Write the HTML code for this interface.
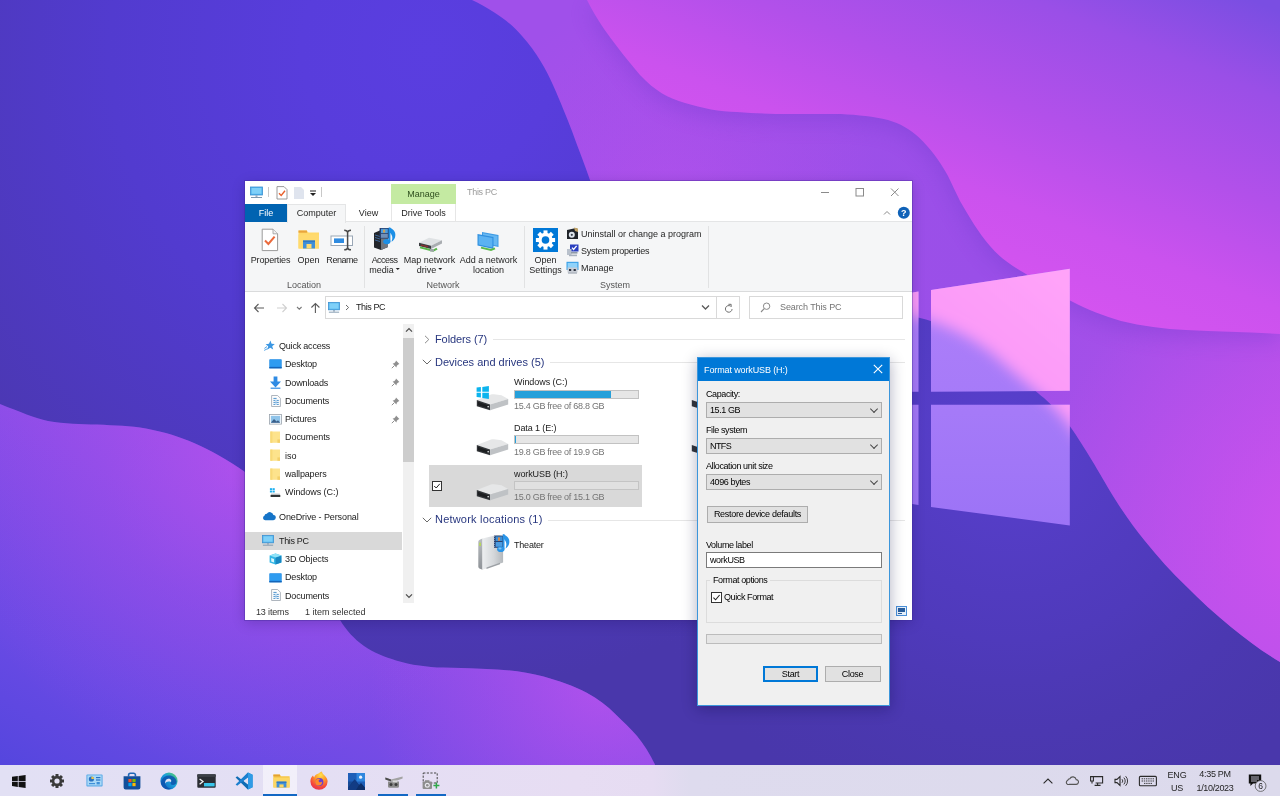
<!DOCTYPE html>
<html lang="en">
<head>
<meta charset="utf-8">
<title>Format workUSB (H:) - This PC</title>
<style>
*{box-sizing:border-box;margin:0;padding:0}
html,body{width:1280px;height:796px;overflow:hidden;background:#4b36b4}
body{font-family:"Liberation Sans",sans-serif;font-size:9px;color:#1a1a1a;position:relative}
.abs{position:absolute}
.t{position:absolute;white-space:nowrap;line-height:12px;height:12px}
.c{text-align:center}
#wall{position:absolute;left:0;top:0;width:1280px;height:796px}
/* ---------- taskbar ---------- */
#taskbar{position:absolute;left:0;top:765px;width:1280px;height:31px;background:linear-gradient(90deg,#e2e0f4 0%,#e4dff4 25%,#e7ddf3 45%,#e6dcf2 51%,#dedbee 54%,#dcdaec 100%)}
/* ---------- explorer window ---------- */
#win{position:absolute;left:245px;top:181px;width:667px;height:439px;background:#fff;box-shadow:0 0 0 1px rgba(60,40,150,.35),0 3px 12px rgba(20,10,70,.22)}
#ribbon{position:absolute;left:0;top:41px;width:667px;height:71px;background:#f5f6f7;border-top:1px solid #e4e5e6;border-bottom:1px solid #dadbdc}
/* ---------- dialog ---------- */
#dlg{position:absolute;left:697px;top:357px;width:193px;height:349px;background:#f0f0f0;border:1px solid #3c96db;box-shadow:0 3px 14px rgba(10,10,60,.32)}
#dlgtitle{position:absolute;left:0;top:0;width:191px;height:23px;background:#0078d7}

/* text helpers */
.g{color:#747474}
.tab{position:absolute;top:204px;height:18px;line-height:18px;text-align:center;font-size:9px;color:#262626}
.rl{position:absolute;font-size:9px;line-height:10px;text-align:center;color:#262626;white-space:nowrap;transform:translateX(-50%)}
.grp{position:absolute;top:279px;font-size:9px;line-height:12px;color:#555;transform:translateX(-50%);white-space:nowrap}
.vsep{position:absolute;top:226px;width:1px;height:62px;background:#e1e2e3}
.nav{position:absolute;font-size:9px;line-height:12px;white-space:nowrap;color:#1a1a1a}
.hdr{position:absolute;left:435px;font-size:11px;line-height:14px;color:#28377f;white-space:nowrap}
.hline{position:absolute;height:1px;background:#e6e6e6}
.bar{position:absolute;left:514px;width:125px;height:9px;background:#e6e6e6;border:1px solid #c2c2c2}
.bar i{display:block;height:7px;background:#26a0da}
.ico{position:absolute;overflow:visible}

.dl{color:#000;letter-spacing:-.4px}
.cmb{position:absolute;left:706px;width:176px;height:16px;background:#e1e1e1;border:1px solid #adadad;font-size:9px;line-height:14px;color:#000;letter-spacing:-.4px;padding-left:3px}
.cmb:after{content:"";position:absolute;right:4px;top:3px;width:5px;height:5px;border-right:1px solid #444;border-bottom:1px solid #444;transform:rotate(45deg) scale(.95)}
.btn{position:absolute;height:16.5px;background:#e1e1e1;border:1px solid #adadad;font-size:9px;line-height:14.5px;text-align:center;color:#000;letter-spacing:-.3px;white-space:nowrap}
.dd{display:inline-block;width:0;height:0;border-left:2.2px solid transparent;border-right:2.2px solid transparent;border-top:2.6px solid #222;vertical-align:2.6px;margin-left:-.5px}
</style>
</head>
<body>
<!-- ================= WALLPAPER ================= -->
<svg id="wall" viewBox="0 0 1280 796">
<defs>
  <radialGradient id="gBase" cx="430" cy="50" r="640" gradientUnits="userSpaceOnUse">
    <stop offset="0" stop-color="#5a3ee0"/><stop offset=".2" stop-color="#583ddc"/><stop offset=".5" stop-color="#523bcf"/><stop offset="1" stop-color="#4937ab"/>
  </radialGradient>
  <linearGradient id="gB" x1="560" y1="60" x2="1280" y2="520" gradientUnits="userSpaceOnUse">
    <stop offset="0" stop-color="#a050ea"/><stop offset=".55" stop-color="#9a4fe8"/><stop offset="1" stop-color="#b451ea"/>
  </linearGradient>
  <radialGradient id="gBase2" cx="1010" cy="440" r="400" gradientUnits="userSpaceOnUse">
    <stop offset="0" stop-color="#5a40cf" stop-opacity="1"/><stop offset=".5" stop-color="#533cc6" stop-opacity=".6"/><stop offset="1" stop-color="#4b38b4" stop-opacity="0"/>
  </radialGradient>
  <radialGradient id="gBh2" cx="670" cy="200" r="210" gradientUnits="userSpaceOnUse">
    <stop offset="0" stop-color="#c452ee" stop-opacity=".4"/><stop offset="1" stop-color="#c050ec" stop-opacity="0"/>
  </radialGradient>
  <radialGradient id="gBh" cx="1330" cy="540" r="300" gradientUnits="userSpaceOnUse">
    <stop offset="0" stop-color="#d052ee" stop-opacity="1"/><stop offset="1" stop-color="#c050ec" stop-opacity="0"/>
  </radialGradient>
  <linearGradient id="gC" x1="1100" y1="-60" x2="950" y2="320" gradientUnits="userSpaceOnUse">
    <stop offset="0" stop-color="#7a4ee2"/><stop offset=".2" stop-color="#9a4fe7"/><stop offset=".45" stop-color="#b250ea"/><stop offset=".68" stop-color="#cb52ee"/><stop offset=".9" stop-color="#d654f0"/><stop offset="1" stop-color="#d855f0"/>
  </linearGradient>
  <linearGradient id="gD" x1="94" y1="234" x2="-188" y2="762" gradientUnits="userSpaceOnUse">
    <stop offset="0" stop-color="#ac50ec"/><stop offset=".333" stop-color="#8a4de8"/><stop offset=".657" stop-color="#694ae4"/><stop offset=".853" stop-color="#5546de"/><stop offset="1" stop-color="#4644da"/>
  </linearGradient>
  <radialGradient id="gDh2" cx="600" cy="690" r="230" gradientUnits="userSpaceOnUse">
    <stop offset="0" stop-color="#cc54f0" stop-opacity=".5"/><stop offset=".5" stop-color="#c452ee" stop-opacity=".24"/><stop offset="1" stop-color="#c050ee" stop-opacity="0"/>
  </radialGradient>
  <radialGradient id="gDh" cx="240" cy="470" r="300" gradientUnits="userSpaceOnUse">
    <stop offset="0" stop-color="#cc54f0" stop-opacity=".44"/><stop offset=".45" stop-color="#c452ee" stop-opacity=".2"/><stop offset="1" stop-color="#c050ee" stop-opacity="0"/>
  </radialGradient>
  <linearGradient id="gP1" x1="1069" y1="270" x2="931" y2="391" gradientUnits="userSpaceOnUse">
    <stop offset="0" stop-color="#ffa2f8"/><stop offset=".6" stop-color="#fb9af8"/><stop offset=".8" stop-color="#bd82f8"/><stop offset="1" stop-color="#a679f8"/>
  </linearGradient>
  <linearGradient id="gP2" x1="1069" y1="404" x2="960" y2="500" gradientUnits="userSpaceOnUse">
    <stop offset="0" stop-color="#f59af8"/><stop offset=".18" stop-color="#a97cf8"/><stop offset="1" stop-color="#9f76f6"/>
  </linearGradient>
  <linearGradient id="gPb" x1="0" y1="300" x2="0" y2="525" gradientUnits="userSpaceOnUse">
    <stop offset="0" stop-color="#ad7ef9"/><stop offset=".5" stop-color="#a57af8"/><stop offset="1" stop-color="#9c73f6"/>
  </linearGradient>
  <linearGradient id="gPp" x1="1069" y1="270" x2="960" y2="400" gradientUnits="userSpaceOnUse">
    <stop offset="0" stop-color="#ffa4f9"/><stop offset=".7" stop-color="#fb9af8"/><stop offset="1" stop-color="#ee92f8"/>
  </linearGradient>
  <filter id="sh2" x="-10%" y="-10%" width="120%" height="120%"><feGaussianBlur stdDeviation="7"/></filter>
  <filter id="sh" x="-10%" y="-10%" width="120%" height="130%">
    <feGaussianBlur stdDeviation="11"/>
  </filter>
</defs>
<rect width="1280" height="796" fill="url(#gBase)"/>
<rect width="1280" height="796" fill="url(#gBase2)"/>
<!-- layer B : medium purple -->
<path id="pB" d="M472,0 C495,11 511,23 522,36 C537,53 546,69 553,85 C561,103 567,118 572,131 C578,148 585,165 590,180 L600,312 L912,316 C950,324 985,345 1005,365 C1020,378 1034,390 1044,398 C1054,407 1062,416 1069,425 C1080,440 1098,470 1110,491 C1122,511 1133,526 1145,541 C1158,557 1171,572 1186,586 C1200,600 1215,614 1231,627 C1247,640 1263,652 1280,662 L1280,0 Z" fill="url(#gB)"/>
<path d="M472,0 C495,11 511,23 522,36 C537,53 546,69 553,85 C561,103 567,118 572,131 C578,148 585,165 590,180 L600,312 L912,316 C950,324 985,345 1005,365 C1020,378 1034,390 1044,398 C1054,407 1062,416 1069,425 C1080,440 1098,470 1110,491 C1122,511 1133,526 1145,541 C1158,557 1171,572 1186,586 C1200,600 1215,614 1231,627 C1247,640 1263,652 1280,662 L1280,0 Z" fill="url(#gBh2)"/>
<path d="M1069,425 C1080,440 1098,470 1110,491 C1122,511 1133,526 1145,541 C1158,557 1171,572 1186,586 C1200,600 1215,614 1231,627 C1247,640 1263,652 1280,662 L1280,334 L1000,250 Z" fill="url(#gBh)"/>
<!-- layer C shadow + shape : magenta -->
<path d="M587,0 C596,18 606,34 640,75 C655,91 668,98 685,103 C702,108 720,112 737,112 C755,113.5 772,114 790,114 C808,114 824,114 841,114 C858,115 874,116.5 888,120 C900,123.5 910,129 919,137.5 C930,148 939,160 947.5,175 C952,184 956,193 960,201 C970,218 978,232 990,246 C1000,258 1012,266 1026,274 C1040,284 1056,294 1071,301 C1088,310 1104,316 1121,321 C1142,326 1164,329 1186,330 C1218,332 1250,332 1280,334 L1280,0 Z" transform="translate(0,8)" fill="#5a2fc0" opacity=".24" filter="url(#sh)"/>
<path id="pC" d="M587,0 C596,18 606,34 640,75 C655,91 668,98 685,103 C702,108 720,112 737,112 C755,113.5 772,114 790,114 C808,114 824,114 841,114 C858,115 874,116.5 888,120 C900,123.5 910,129 919,137.5 C930,148 939,160 947.5,175 C952,184 956,193 960,201 C970,218 978,232 990,246 C1000,258 1012,266 1026,274 C1040,284 1056,294 1071,301 C1088,310 1104,316 1121,321 C1142,326 1164,329 1186,330 C1218,332 1250,332 1280,334 L1280,0 Z" fill="url(#gC)"/>
<!-- layer D : lower-left blob -->
<path id="pD" d="M0,404 C20,412 35,418 48,421 C65,424 80,424 97,424.6 C115,425.5 130,426 146,428.5 C165,432 180,437 194,443 C203,447 211,451 218,455 C228,461 237,466 245,472 L300,600 L340,620 C346,630 354,639 364,646 C374,653 385,657 396,660.4 C411,665 427,667 443,667.6 C461,668.3 479,668.6 497,669.4 C513,670.2 529,672.5 543.6,676.5 C559,680.8 574,686 586.7,692.7 C598,698.7 607.5,706 615.5,714.3 C623,721.5 630.5,728.5 637,736 C644,744.5 650,754 655,764.7 L657,768 L0,768 Z" fill="url(#gD)"/>
<path d="M0,404 C20,412 35,418 48,421 C65,424 80,424 97,424.6 C115,425.5 130,426 146,428.5 C165,432 180,437 194,443 C203,447 211,451 218,455 C228,461 237,466 245,472 L300,600 L340,620 C346,630 354,639 364,646 C374,653 385,657 396,660.4 C411,665 427,667 443,667.6 C461,668.3 479,668.6 497,669.4 C513,670.2 529,672.5 543.6,676.5 C559,680.8 574,686 586.7,692.7 C598,698.7 607.5,706 615.5,714.3 C623,721.5 630.5,728.5 637,736 C644,744.5 650,754 655,764.7 L657,768 L0,768 Z" fill="url(#gDh)"/>
<path d="M0,404 C20,412 35,418 48,421 C65,424 80,424 97,424.6 C115,425.5 130,426 146,428.5 C165,432 180,437 194,443 C203,447 211,451 218,455 C228,461 237,466 245,472 L300,600 L340,620 C346,630 354,639 364,646 C374,653 385,657 396,660.4 C411,665 427,667 443,667.6 C461,668.3 479,668.6 497,669.4 C513,670.2 529,672.5 543.6,676.5 C559,680.8 574,686 586.7,692.7 C598,698.7 607.5,706 615.5,714.3 C623,721.5 630.5,728.5 637,736 C644,744.5 650,754 655,764.7 L657,768 L0,768 Z" fill="url(#gDh2)"/>
<!-- windows logo -->
<clipPath id="cpL"><polygon points="850,303 918.5,291.5 918.5,391.8 850,392"/><polygon points="850,404.8 918.5,404.8 918.5,505 850,494"/><polygon points="931,290 1069.8,268.8 1069.8,390.8 931,391.8"/><polygon points="931,404.8 1069.8,404.8 1069.8,525.5 931,507"/></clipPath>
<g clip-path="url(#cpL)">
  <rect x="840" y="260" width="240" height="280" fill="url(#gPb)"/>
  <path d="M472,0 C495,11 511,23 522,36 C537,53 546,69 553,85 C561,103 567,118 572,131 C578,148 585,165 590,180 L600,312 L912,316 C950,324 985,345 1005,365 C1020,378 1034,390 1044,398 C1054,407 1062,416 1069,425 C1080,440 1098,470 1110,491 C1122,511 1133,526 1145,541 C1158,557 1171,572 1186,586 C1200,600 1215,614 1231,627 C1247,640 1263,652 1280,662 L1280,0 Z" fill="url(#gPp)" filter="url(#sh2)"/>
</g>
</svg>

<div id="ui" style="position:absolute;left:0;top:0;width:1280px;height:796px;will-change:transform">
<!-- ================= TASKBAR ================= -->
<div id="taskbar"></div>
<div class="abs" style="left:263px;top:765px;width:34px;height:31px;background:rgba(255,255,255,.5)"></div>
<div class="abs" style="left:263px;top:794px;width:34px;height:2px;background:#1368c4"></div>
<div class="abs" style="left:378px;top:794px;width:30px;height:2px;background:#1368c4"></div>
<div class="abs" style="left:416px;top:794px;width:30px;height:2px;background:#1368c4"></div>
<!-- start -->
<svg class="ico" style="left:11.5px;top:774.5px" width="14" height="13" viewBox="0 0 14 13"><g fill="#111"><path d="M0,1.8 L5.8,1 V6 H0 Z"/><path d="M6.6,.9 L13.6,0 V6 H6.6 Z"/><path d="M0,6.8 H5.8 V11.9 L0,11.1 Z"/><path d="M6.6,6.8 H13.6 V13 L6.6,12 Z"/></g></svg>
<!-- settings gear -->
<svg class="ico" style="left:50px;top:774px" width="14" height="14" viewBox="0 0 14 14"><g transform="translate(7,7)"><g fill="#3a3a3a"><rect x="-1.5" y="-7" width="3" height="14"/><rect x="-1.5" y="-7" width="3" height="14" transform="rotate(45)"/><rect x="-1.5" y="-7" width="3" height="14" transform="rotate(90)"/><rect x="-1.5" y="-7" width="3" height="14" transform="rotate(135)"/><circle r="5.2"/></g><circle r="2.6" fill="#e2e0f3"/></g></svg>
<!-- control panel -->
<svg class="ico" style="left:86px;top:774px" width="17" height="13" viewBox="0 0 17 13"><rect x=".4" y=".4" width="16.2" height="12" rx="1" fill="#5aa9e6"/><rect x="1.4" y="1.4" width="14.2" height="10" fill="#a9d8f7"/><circle cx="5.4" cy="5" r="2.6" fill="#2a72c2"/><path d="M5.4,5 V2.4 A2.6,2.6 0 0 1 8,5 Z" fill="#f3c540"/><rect x="10" y="3" width="4.4" height="1.2" fill="#2a72c2"/><rect x="10" y="5.4" width="4.4" height="1.2" fill="#2a72c2"/><rect x="3" y="9" width="6" height="1.2" fill="#3f8fd8"/><rect x="10.6" y="8" width="3.2" height="2.4" fill="#3f8fd8"/></svg>
<!-- store -->
<svg class="ico" style="left:122.5px;top:772px" width="18" height="18" viewBox="0 0 18 18"><path d="M5.6,4.4 V3 A1.8,1.8 0 0 1 7.4,1.2 H10.6 A1.8,1.8 0 0 1 12.4,3 V4.4" fill="none" stroke="#1f67b7" stroke-width="1.6"/><path d="M.6,4.2 H17.4 V15.6 A2,2 0 0 1 15.4,17.6 H2.6 A2,2 0 0 1 .6,15.6 Z" fill="#134f9a"/><rect x="5.4" y="7" width="3.2" height="3.2" fill="#f25022"/><rect x="9.4" y="7" width="3.2" height="3.2" fill="#7fba00"/><rect x="5.4" y="11" width="3.2" height="3.2" fill="#00a4ef"/><rect x="9.4" y="11" width="3.2" height="3.2" fill="#ffb900"/></svg>
<!-- edge -->
<svg class="ico" style="left:160px;top:772px" width="18" height="18" viewBox="0 0 18 18"><defs><linearGradient id="eg1" x1="0" y1="1" x2="1" y2="0"><stop offset="0" stop-color="#0d59b8"/><stop offset=".55" stop-color="#1aa0dc"/><stop offset="1" stop-color="#5fd55a"/></linearGradient></defs><circle cx="9" cy="9" r="8.6" fill="url(#eg1)"/><path d="M9,3.4 C13,3.4 16.4,6 16.6,9.6 C16.6,11.6 15,13 13,13 C11.4,13 10.4,12.2 10.6,11 C10.8,9.8 11.4,9.6 11.2,8.6 C11,7.2 9.6,6.6 8.2,6.8 C5.6,7.2 4.4,10 5.6,12.8 C6.6,15.2 9,16.8 11.6,16.6 C9,18.2 4.6,17.6 2.2,14.6 C-.6,10.6 2,3.6 9,3.4 Z" fill="#0c54ae" opacity=".85"/><path d="M8.2,6.8 C6,7.2 4.8,9.4 5.2,11.6 C6,9.6 8.4,9 10.8,10 C11.2,9.4 11.4,9 11.2,8.4 C10.8,7.2 9.6,6.6 8.2,6.8 Z" fill="#e2e0f3"/></svg>
<!-- terminal -->
<svg class="ico" style="left:197px;top:774px" width="19" height="14" viewBox="0 0 19 14"><rect x=".3" y=".3" width="18.4" height="13.4" rx="1" fill="#2a2d33"/><rect x=".3" y=".3" width="18.4" height="2.6" fill="#3d4148"/><path d="M2.6,5 L6,7.6 L2.6,10.2" fill="none" stroke="#f2f2f2" stroke-width="1.3"/><rect x="7" y="9" width="10.6" height="3.4" fill="#39c5ea"/></svg>
<!-- vs code -->
<svg class="ico" style="left:234.5px;top:772px" width="18" height="18" viewBox="0 0 18 18"><path d="M13,.6 L17.6,2.8 V15.2 L13,17.4 L4.6,9 Z" fill="#1f8ad2"/><path d="M13,.6 L17.6,2.8 V15.2 L13,17.4 Z" fill="#2f9be6"/><path d="M13,5.2 V12.8 L8,9 Z" fill="#e2e0f3"/><path d="M.6,5.6 L2.2,4.2 L13,12.8 V17.4 Z" fill="#0f6cb4"/><path d="M.6,12.4 L2.2,13.8 L13,5.2 V.6 Z" fill="#1b7fcf"/></svg>
<!-- explorer -->
<svg class="ico" style="left:272.5px;top:773.5px" width="17" height="14" viewBox="0 0 17 14"><path d="M.4,.6 H6.6 L8.2,2.2 H16.6 V13.4 H.4 Z" fill="#f6c648"/><rect x=".4" y=".6" width="6.6" height="1.8" fill="#e3a132"/><path d="M.4,3.6 H16.6 V13.4 H.4 Z" fill="#fcd663"/><path d="M3.6,7.6 H13.4 V13.4 H3.6 Z" fill="#3f8fd8"/><rect x="6.4" y="10.4" width="4.2" height="3" fill="#fcd663"/><rect x="3.6" y="7.6" width="9.8" height="1.4" fill="#2f78c4"/></svg>
<!-- firefox -->
<svg class="ico" style="left:309.5px;top:771px" width="18" height="19" viewBox="0 0 18 19"><defs><radialGradient id="ff1" cx=".6" cy=".2" r=".95"><stop offset="0" stop-color="#ffe14d"/><stop offset=".35" stop-color="#ff9a28"/><stop offset=".7" stop-color="#f5453c"/><stop offset="1" stop-color="#d42a6a"/></radialGradient></defs><path d="M9,2.2 C10,1 11.2,.6 12,.4 C12,2 13,3 14.6,4.6 C16.6,6.6 17.6,8.6 17.6,10.6 A8.6,8.2 0 0 1 .4,10.6 C.4,8 1.4,6 3,4.6 C3.2,5.4 3.6,6 4.2,6.4 C4.6,4.4 6.6,2.8 9,2.2 Z" fill="url(#ff1)"/><circle cx="9.4" cy="11" r="4" fill="#6a3fd0"/><path d="M5.4,9.4 C6.4,8 8.4,7.4 10.4,8.2 C9,8.4 8.4,9.4 8.8,10.4 C9.2,11.4 11,11.6 12,10.8 C12.4,13 10.6,14.8 8.6,14.6 C6.2,14.4 4.6,12 5.4,9.4 Z" fill="#ff8a2a"/></svg>
<!-- photos -->
<svg class="ico" style="left:347.5px;top:772.5px" width="17" height="17" viewBox="0 0 17 17"><rect width="17" height="17" fill="#1f5fb8"/><rect x="8.5" width="8.5" height="8.5" fill="#2f86de"/><rect y="8.5" width="8.5" height="8.5" fill="#164a96"/><circle cx="12.6" cy="4.2" r="1.6" fill="#e8f2ff"/><path d="M0,15 L6.6,6.6 L11,12 L13,10 L17,14.6 V17 H0 Z" fill="#0d2f6a"/><path d="M6.6,6.6 L11,12 L8,17 H0 V15 Z" fill="#123c84"/></svg>
<!-- tool -->
<svg class="ico" style="left:384.5px;top:776px" width="18" height="12" viewBox="0 0 18 12"><path d="M.4,1.4 L6,3.4 L17.6,.6 L17.6,2.6 L8,6 L.4,3.4 Z" fill="#a3a3a3"/><path d="M.4,1.4 L6,3.4 V5.4 L.4,3.4 Z" fill="#4a4a4a"/><path d="M3,5.4 H14 V10.4 A1.4,1.4 0 0 1 12.6,11.8 H4.4 A1.4,1.4 0 0 1 3,10.4 Z" fill="#8b8b8b"/><circle cx="6" cy="8.6" r="1.5" fill="#3c3c3c"/><circle cx="11" cy="8.6" r="1.5" fill="#3c3c3c"/><rect x="7.6" y="4.4" width="4.6" height="2" fill="#d8d8d8"/></svg>
<!-- snip -->
<svg class="ico" style="left:422px;top:772px" width="18" height="18" viewBox="0 0 18 18"><rect x="1.2" y="1" width="14" height="10" fill="none" stroke="#444" stroke-width="1" stroke-dasharray="2.2,1.4"/><rect x=".6" y="9.4" width="9.4" height="7.6" rx="1" fill="#8e8e8e"/><rect x="3" y="8.2" width="4.4" height="1.8" fill="#8e8e8e"/><circle cx="5.3" cy="13.2" r="2.5" fill="#e8e8ee"/><circle cx="5.3" cy="13.2" r="1.3" fill="#8e8e8e"/><path d="M14.4,10.6 V16.6 M11.4,13.6 H17.4" stroke="#2fa84a" stroke-width="1.5"/></svg>
<!-- tray -->
<svg class="ico" style="left:1040px;top:772px" width="122" height="18" viewBox="0 0 122 18"><g fill="none" stroke="#2b2b2b" stroke-width="1.1"><path d="M3.6,11.4 L8,7 L12.4,11.4"/><path d="M29.2,12.4 H36 A2.4,2.4 0 0 0 36.2,7.6 A3.4,3.4 0 0 0 29.8,6.8 A2.4,2.4 0 0 0 27.6,8.6 A2,2 0 0 0 29.2,12.4 Z" stroke="#555"/><path d="M52.6,4.6 H62.6 V11 H55.6 M50.6,4.6 H53.4 V9 H50.6 Z M52,9 V11.6 M57.6,11 V13.4 M54.6,13.4 H60.6"/><path d="M75,7.4 H77 L80,4.6 V13.4 L77,10.6 H75 Z"/><path d="M82,7.2 A2.6,2.6 0 0 1 82,10.8 M83.8,5.6 A4.8,4.8 0 0 1 83.8,12.4 M85.6,4.2 A6.8,6.8 0 0 1 85.6,13.8" stroke-width=".9"/><rect x="99.4" y="4.4" width="17" height="9.4" rx="1"/><path d="M101.6,6.8 H114.4 M101.6,9 H114.4 M104,11.4 H112" stroke-width=".9" stroke-dasharray="1.4,.8"/></g></svg>
<div class="t c" style="left:1157px;top:768.7px;width:40px;color:#1f1f1f;letter-spacing:-.2px">ENG</div>
<div class="t c" style="left:1157px;top:781.5px;width:40px;color:#1f1f1f;letter-spacing:-.2px">US</div>
<div class="t c" style="left:1185px;top:768.3px;width:60px;color:#1f1f1f;letter-spacing:-.3px">4:35 PM</div>
<div class="t c" style="left:1185px;top:781.5px;width:60px;color:#1f1f1f;letter-spacing:-.35px">1/10/2023</div>
<svg class="ico" style="left:1248px;top:774px" width="20" height="19" viewBox="0 0 20 19"><path d="M.8,.6 H13.2 V9.6 H5 L2.4,12 V9.6 H.8 Z" fill="#111"/><path d="M3,3 H11 M3,5 H11 M3,7 H9" stroke="#e2e0f3" stroke-width=".8"/><circle cx="12.6" cy="12" r="5.4" fill="#dfddf0" stroke="#555" stroke-width=".8"/><text x="12.6" y="15" font-size="8.5" fill="#222" text-anchor="middle" font-family="Liberation Sans,sans-serif">6</text></svg>

<!-- ================= EXPLORER WINDOW ================= -->
<div id="win"></div>
<div id="ribbon" style="left:245px;top:221px"></div>
<!-- title bar -->
<svg class="ico" style="left:249px;top:186px" width="15" height="13" viewBox="0 0 15 13"><rect x="1.5" y="1" width="12" height="8" fill="#4fb4ee" stroke="#3a8fd0" stroke-width=".8"/><rect x="2.6" y="2" width="9.8" height="5.8" fill="#7fd0f8"/><rect x="6.5" y="9.4" width="2" height="1.4" fill="#8aa0b4"/><rect x="2" y="11" width="11" height="1" fill="#7f98ae"/></svg>
<div class="abs" style="left:268px;top:187px;width:1px;height:10px;background:#c8c8c8"></div>
<svg class="ico" style="left:276px;top:186px" width="12" height="14" viewBox="0 0 12 14"><path d="M1,.6 H8 L11,3.6 V13 H1 Z" fill="#fff" stroke="#8f8f8f" stroke-width=".9"/><path d="M3,7.2 L5.2,9.4 L9,4.8" fill="none" stroke="#e9602c" stroke-width="1.4"/></svg>
<svg class="ico" style="left:293px;top:187px" width="12" height="13" viewBox="0 0 12 13"><path d="M1,0 H8 L11,3 V12 H1 Z" fill="#dfe4ee"/></svg>
<svg class="ico" style="left:309px;top:190px" width="8" height="7" viewBox="0 0 8 7"><rect x="1" y="0.5" width="6" height="1" fill="#222"/><path d="M1,3 H7 L4,6 Z" fill="#222"/></svg>
<div class="abs" style="left:321px;top:187px;width:1px;height:10px;background:#c8c8c8"></div>
<div class="abs" style="left:391px;top:184px;width:65px;height:20px;background:#c4eaa2"></div>
<div class="t c" style="left:391px;top:188px;width:65px;color:#2f4f1f">Manage</div>
<div class="t" style="left:467px;top:186px;color:#9b9b9b;letter-spacing:-.3px">This PC</div>
<svg class="ico" style="left:816px;top:185px" width="90" height="14" viewBox="0 0 90 14"><g stroke="#8a8a8a" stroke-width="1" fill="none"><path d="M5,7.5 H13"/><rect x="40" y="3.5" width="7.5" height="7.5"/><path d="M75,3.5 L82.5,11 M82.5,3.5 L75,11"/></g></svg>
<!-- tabs -->
<div class="abs" style="left:245px;top:204px;width:42px;height:18px;background:#0063b1"></div>
<div class="tab" style="left:245px;width:42px;color:#fff">File</div>
<div class="abs" style="left:287px;top:204px;width:59px;height:19px;background:#f5f6f7;border:1px solid #e4e5e6;border-bottom:0"></div>
<div class="tab" style="left:287px;width:59px">Computer</div>
<div class="tab" style="left:346px;width:45px">View</div>
<div class="abs" style="left:391px;top:204px;width:65px;height:18px;border-left:1px solid #e6e6e6;border-right:1px solid #e6e6e6"></div>
<div class="tab" style="left:391px;width:65px">Drive Tools</div>
<svg class="ico" style="left:882px;top:206px" width="30" height="14" viewBox="0 0 30 14"><path d="M2,8.5 L5,5.5 L8,8.5" fill="none" stroke="#8a8a8a" stroke-width="1"/><circle cx="21.8" cy="6.8" r="6" fill="#0f62b8"/><text x="21.8" y="10" font-size="9" font-weight="bold" fill="#fff" text-anchor="middle" font-family="Liberation Sans,sans-serif">?</text></svg>
<!-- ribbon separators and group labels -->
<div class="vsep" style="left:364px"></div><div class="vsep" style="left:524px"></div><div class="vsep" style="left:708px"></div>
<div class="grp" style="left:304px">Location</div><div class="grp" style="left:443px">Network</div><div class="grp" style="left:615px">System</div>
<!-- ribbon icons -->
<svg class="ico" style="left:261px;top:228px" width="18" height="24" viewBox="0 0 18 24"><path d="M1.2,1.2 H12 L16.6,5.8 V22.6 H1.2 Z" fill="#fff" stroke="#9a9a9a" stroke-width="1"/><path d="M12,1.2 V5.8 H16.6" fill="#f0f0f0" stroke="#9a9a9a" stroke-width=".8"/><path d="M4,12.5 L7.4,16 L13.6,8.6" fill="none" stroke="#ea6a3c" stroke-width="2"/></svg>
<svg class="ico" style="left:298px;top:229px" width="22" height="21" viewBox="0 0 22 21"><path d="M.5,1.5 H8.5 L10.5,3.5 H21 V19.5 H.5 Z" fill="#ffd869"/><rect x=".5" y="1.5" width="8.5" height="2.2" fill="#e9a53c"/><path d="M.5,5.5 H21 V19.5 H.5 Z" fill="#ffda6e"/><path d="M5,11.5 H17 V19.5 H5 Z" fill="#3f8fd8"/><rect x="8.5" y="15" width="5" height="4.5" fill="#ffda6e"/><rect x="5" y="11.5" width="12" height="1.6" fill="#2f78c4"/></svg>
<svg class="ico" style="left:330px;top:229px" width="25" height="22" viewBox="0 0 25 22"><rect x="1" y="7" width="21.5" height="9.5" fill="#fff" stroke="#9aa7b6" stroke-width="1"/><rect x="4" y="9.4" width="10" height="4.6" fill="#2f8be0"/><path d="M14.2,1.2 C16.5,1.2 17.4,2 17.6,3.4 C17.8,2 18.8,1.2 21,1.2 M14.2,20.8 C16.5,20.8 17.4,20 17.6,18.6 C17.8,20 18.8,20.8 21,20.8 M17.6,3 V19" fill="none" stroke="#4a4a4a" stroke-width="1.5"/></svg>
<svg class="ico" style="left:372px;top:227px" width="26" height="24" viewBox="0 0 26 24"><path d="M2,6 L9,3 L16,5 V20 L9,23 L2,20.5 Z" fill="#23262b"/><path d="M9,3 L16,5 V20 L9,23 Z" fill="#70767f"/><path d="M3,8 L8,9.5 M3,10.5 L8,12 M3,13 L8,14.5" stroke="#3f6ea6" stroke-width=".9"/><rect x="7.6" y="1" width="9.6" height="10.6" fill="#27406e"/><rect x="9" y="1.8" width="6.8" height="4.2" fill="#4a9be0"/><rect x="9" y="6.8" width="6.8" height="4" fill="#6f8fb8"/><rect x="11" y="2.6" width="2.2" height="3" fill="#c9a05a"/><path d="M17.4,.6 C22.2,2.6 24.4,6 23,10.4 C22.2,12.8 20.6,14 19.4,14.6 C21,11.8 20.8,7.8 17.4,5.2 Z" fill="#1c8fe6"/><rect x="16.6" y=".6" width="1.8" height="14" fill="#1c8fe6"/><ellipse cx="14.8" cy="14.6" rx="3.6" ry="2.7" fill="#1c8fe6"/></svg>
<svg class="ico" style="left:417px;top:236px" width="27" height="16" viewBox="0 0 27 19" preserveAspectRatio="none"><path d="M2,8 L12,2 L25,5 L14,11.5 Z" fill="#dfe2e4"/><path d="M2,8 L14,11.5 V15.5 L2,12 Z" fill="#3a3d40"/><path d="M14,11.5 L25,5 V9 L14,15.5 Z" fill="#a9adb1"/><path d="M4,10 L11,12 V13.6 L4,11.6 Z" fill="#8c2f2f"/><path d="M3,13.5 L16,17.5 L20,15" fill="none" stroke="#58b84a" stroke-width="2.2"/><rect x="13" y="15.5" width="4" height="3" fill="#9ea3a8"/></svg>
<svg class="ico" style="left:476px;top:230px" width="25" height="22" viewBox="0 0 25 22"><path d="M6,2 L22.5,5 V17 L6,13.5 Z" fill="#3f9be4"/><path d="M7,3.3 L21.5,6 V15.7 L7,12.6 Z" fill="#67b8f2"/><path d="M1.5,4 L17.5,7 V19 L1.5,15.5 Z" fill="#2f8fdf"/><path d="M2.6,5.4 L16.4,8 V17.6 L2.6,14.6 Z" fill="#5bb2f2"/><path d="M5,17.6 L15,20 L19,18.4" fill="none" stroke="#5cba4c" stroke-width="2"/></svg>
<svg class="ico" style="left:533px;top:228px" width="25" height="24" viewBox="0 0 25 24"><rect width="25" height="24" fill="#0078d7"/><g transform="translate(12.5,12)"><g fill="#fff"><rect x="-2" y="-9.6" width="4" height="19.2"/><rect x="-2" y="-9.6" width="4" height="19.2" transform="rotate(45)"/><rect x="-2" y="-9.6" width="4" height="19.2" transform="rotate(90)"/><rect x="-2" y="-9.6" width="4" height="19.2" transform="rotate(135)"/><circle r="7.2"/></g><circle r="3.8" fill="#0078d7"/></g></svg>
<svg class="ico" style="left:566px;top:227px" width="13" height="13" viewBox="0 0 13 13"><path d="M1,3 L10,1 L12,2.5 V12 H1 Z" fill="#20242a"/><path d="M8,.5 L12,1.5 V5 L9,4 Z" fill="#c2a468"/><circle cx="5.8" cy="7.8" r="3" fill="#dfe6ee"/><circle cx="5.8" cy="7.8" r="1.1" fill="#39404a"/></svg>
<svg class="ico" style="left:566px;top:244px" width="13" height="13" viewBox="0 0 13 13"><rect x="4" y=".5" width="8.5" height="7" fill="#2a3fc0"/><path d="M6,3.6 L7.6,5.4 L10.6,1.8" fill="none" stroke="#fff" stroke-width="1.3"/><rect x="1" y="5" width="4.5" height="6" fill="#b9c1cc"/><rect x="5" y="8" width="6.5" height="1.6" fill="#8f9aa8"/><rect x="3" y="10.6" width="8" height="1.6" fill="#a7b0bc"/></svg>
<svg class="ico" style="left:566px;top:261px" width="13" height="13" viewBox="0 0 13 13"><rect x=".5" y=".8" width="12" height="8.2" fill="#39a0e8"/><rect x="1.6" y="1.9" width="9.8" height="5" fill="#8fd2fa"/><rect x="1.5" y="6.5" width="10" height="5" fill="#c9ced6"/><rect x="3" y="8" width="2.2" height="2" fill="#2d3340"/><rect x="7.6" y="8" width="2.2" height="2" fill="#2d3340"/><rect x="2" y="11.5" width="9" height="1" fill="#8f98a5"/></svg>
<!-- ribbon labels -->
<div class="rl" style="left:270.5px;top:255px;letter-spacing:-.15px">Properties</div>
<div class="rl" style="left:308.5px;top:255px">Open</div>
<div class="rl" style="left:342px;top:255px;letter-spacing:-.45px">Rename</div>
<div class="rl" style="left:384.5px;top:255px"><span style="letter-spacing:-.55px">Access</span><br>media <i class="dd"></i></div>
<div class="rl" style="left:429.5px;top:255px">Map network<br>drive <i class="dd"></i></div>
<div class="rl" style="left:488.5px;top:255px">Add a network<br>location</div>
<div class="rl" style="left:545.5px;top:255px">Open<br>Settings</div>
<div class="t" style="left:581px;top:228px;color:#262626">Uninstall or change a program</div>
<div class="t" style="left:581px;top:245px;color:#262626;letter-spacing:-.25px">System properties</div>
<div class="t" style="left:581px;top:262px;color:#262626">Manage</div>

<!-- address row -->
<svg class="ico" style="left:252px;top:301px" width="72" height="14" viewBox="0 0 72 14"><g fill="none" stroke-width="1.1"><path d="M2.5,7 H12 M6.5,3 L2.5,7 L6.5,11" stroke="#5a5a5a"/><path d="M25,7 H34.5 M30.5,3 L34.5,7 L30.5,11" stroke="#d0d0d0"/><path d="M45,6 L47.3,8.2 L49.6,6" stroke="#7a7a7a"/><path d="M63.4,12 V2.5 M59.4,6.5 L63.4,2.5 L67.4,6.5" stroke="#5a5a5a"/></g></svg>
<div class="abs" style="left:325px;top:296px;width:415px;height:23px;border:1px solid #d9d9d9;background:#fff"></div>
<div class="abs" style="left:716px;top:297px;width:1px;height:21px;background:#d9d9d9"></div>
<svg class="ico" style="left:327px;top:301px" width="14" height="13" viewBox="0 0 15 13"><rect x="1.5" y="1" width="12" height="8" fill="#4fb4ee" stroke="#3a8fd0" stroke-width=".8"/><rect x="2.6" y="2" width="9.8" height="5.8" fill="#7fd0f8"/><rect x="6.5" y="9.4" width="2" height="1.4" fill="#8aa0b4"/><rect x="2" y="11" width="11" height="1" fill="#7f98ae"/></svg>
<svg class="ico" style="left:345px;top:304px" width="5" height="7" viewBox="0 0 5 7"><path d="M1,1 L3.6,3.5 L1,6" fill="none" stroke="#6a6a6a" stroke-width="1"/></svg>
<div class="t" style="left:356px;top:301px;letter-spacing:-.4px">This PC</div>
<svg class="ico" style="left:701px;top:304px" width="9" height="7" viewBox="0 0 9 7"><path d="M1,1.5 L4.5,5 L8,1.5" fill="none" stroke="#5a5a5a" stroke-width="1.3"/></svg>
<svg class="ico" style="left:723.5px;top:303.5px" width="9.5" height="9.5" viewBox="0 0 12 12"><path d="M8.2,2.6 A4.2,4.2 0 1 0 10.2,6.4" fill="none" stroke="#5a5a5a" stroke-width="1.1"/><path d="M5.6,.4 H9 V3.8" fill="none" stroke="#5a5a5a" stroke-width="1.1"/></svg>
<div class="abs" style="left:749px;top:296px;width:154px;height:23px;border:1px solid #d9d9d9;background:#fff"></div>
<svg class="ico" style="left:760px;top:302px" width="11" height="11" viewBox="0 0 11 11"><circle cx="6.6" cy="4.2" r="3.2" fill="none" stroke="#8a8a8a" stroke-width="1"/><path d="M4.2,6.6 L1,10" stroke="#8a8a8a" stroke-width="1.1"/></svg>
<div class="t g" style="left:780px;top:301px;letter-spacing:-.1px">Search This PC</div>

<!-- nav pane -->
<div class="abs" style="left:403px;top:324px;width:11px;height:279px;background:#f0f0f0"></div>
<div class="abs" style="left:403px;top:338px;width:11px;height:124px;background:#cdcdcd"></div>
<svg class="ico" style="left:405px;top:327px" width="8" height="6" viewBox="0 0 8 6"><path d="M1,4.6 L4,1.6 L7,4.6" fill="none" stroke="#505050" stroke-width="1.3"/></svg>
<svg class="ico" style="left:405px;top:593px" width="8" height="6" viewBox="0 0 8 6"><path d="M1,1.4 L4,4.4 L7,1.4" fill="none" stroke="#505050" stroke-width="1.3"/></svg>
<div class="abs" style="left:245px;top:532px;width:157px;height:18px;background:#d9d9d9"></div>
<svg class="ico" style="left:264px;top:340px" width="11" height="11" viewBox="0 0 11 11"><path d="M6.4,.4 L7.6,3.8 L10.8,4 L8.2,6.2 L9.2,9.6 L6.2,7.8 L3.2,9.8 L4.2,6.2 L1.6,4.2 L5,3.8 Z" fill="#3b97e3"/><path d="M.4,8.4 L3,6.6 M.2,10.4 L3.6,8.6" stroke="#3b97e3" stroke-width=".9"/></svg>
<div class="nav" style="left:279px;top:339.5px;letter-spacing:-.2px">Quick access</div>
<svg class="ico" style="left:269px;top:359px" width="13" height="10" viewBox="0 0 13 10"><rect x=".3" y=".3" width="12.4" height="9" rx=".6" fill="#1c8ae6"/><rect x="1" y="1" width="11" height="6.6" fill="#2f9cf0"/><rect x=".3" y="8" width="12.4" height="1.4" fill="#1565b8"/></svg><div class="nav" style="left:285px;top:358px;letter-spacing:-.15px">Desktop</div><svg class="ico" style="left:391px;top:359.5px" width="9" height="9" viewBox="0 0 9 9"><path d="M5,.6 L8.4,4 L7.2,4.4 L5.8,5.8 L5.4,7.4 L1.6,3.6 L3.2,3.2 L4.6,1.8 Z" fill="#8f8f8f"/><path d="M3.4,5.6 L.8,8.2" stroke="#8f8f8f" stroke-width="1"/></svg>
<svg class="ico" style="left:269px;top:376px" width="13" height="13" viewBox="0 0 13 13"><path d="M4.6,.4 H8.4 V5.4 H12 L6.5,11.4 L1,5.4 H4.6 Z" fill="#2f8be4"/><rect x="1.6" y="11.6" width="9.8" height="1.2" fill="#2f8be4"/></svg>
<div class="nav" style="left:285px;top:376.5px;letter-spacing:-.15px">Downloads</div><svg class="ico" style="left:391px;top:378px" width="9" height="9" viewBox="0 0 9 9"><path d="M5,.6 L8.4,4 L7.2,4.4 L5.8,5.8 L5.4,7.4 L1.6,3.6 L3.2,3.2 L4.6,1.8 Z" fill="#8f8f8f"/><path d="M3.4,5.6 L.8,8.2" stroke="#8f8f8f" stroke-width="1"/></svg>
<svg class="ico" style="left:270.5px;top:394.5px" width="10" height="12" viewBox="0 0 10 12"><path d="M.6,.5 H6.6 L9.4,3.3 V11.5 H.6 Z" fill="#fdfdfd" stroke="#9aa3ad" stroke-width=".8"/><path d="M2.4,3.4 H5.6 M2.4,5.4 H4.4 M5.6,5.4 H7.8 M2.4,7.4 H7.8 M2.4,9.4 H4.4 M5.6,9.4 H7.8" stroke="#4f93cc" stroke-width="1"/><rect x="4.4" y="4.6" width="1.2" height="5.4" fill="#a9cfee"/></svg><div class="nav" style="left:285px;top:395px;letter-spacing:-.15px">Documents</div><svg class="ico" style="left:391px;top:396.5px" width="9" height="9" viewBox="0 0 9 9"><path d="M5,.6 L8.4,4 L7.2,4.4 L5.8,5.8 L5.4,7.4 L1.6,3.6 L3.2,3.2 L4.6,1.8 Z" fill="#8f8f8f"/><path d="M3.4,5.6 L.8,8.2" stroke="#8f8f8f" stroke-width="1"/></svg>
<svg class="ico" style="left:269px;top:413.5px" width="13" height="11" viewBox="0 0 13 11"><rect x=".5" y=".5" width="12" height="9.6" fill="#fff" stroke="#9aa3ad" stroke-width=".8"/><rect x="1.8" y="1.8" width="9.4" height="7" fill="#8fc4ea"/><path d="M1.8,8.8 L5,5 L7.6,7.4 L9,6.2 L11.2,8.8 Z" fill="#3a5f8a"/></svg>
<div class="nav" style="left:285px;top:413px;letter-spacing:-.15px">Pictures</div><svg class="ico" style="left:391px;top:415px" width="9" height="9" viewBox="0 0 9 9"><path d="M5,.6 L8.4,4 L7.2,4.4 L5.8,5.8 L5.4,7.4 L1.6,3.6 L3.2,3.2 L4.6,1.8 Z" fill="#8f8f8f"/><path d="M3.4,5.6 L.8,8.2" stroke="#8f8f8f" stroke-width="1"/></svg>
<svg class="ico" style="left:270px;top:430.5px" width="10" height="12" viewBox="0 0 10 12"><path d="M.3,.5 H10 V11.8 H.3 Z" fill="#fde38c"/><path d="M.3,.5 H2.4 V11.8 H.3 Z" fill="#f8d978"/><rect x="7.4" y="8.4" width="2.6" height="3.4" fill="#f3cf6a"/></svg><div class="nav" style="left:285px;top:430.7px;letter-spacing:-.05px">Documents</div>
<svg class="ico" style="left:270px;top:449px" width="10" height="12" viewBox="0 0 10 12"><path d="M.3,.5 H10 V11.8 H.3 Z" fill="#fde38c"/><path d="M.3,.5 H2.4 V11.8 H.3 Z" fill="#f8d978"/><rect x="7.4" y="8.4" width="2.6" height="3.4" fill="#f3cf6a"/></svg><div class="nav" style="left:285px;top:449.5px">iso</div>
<svg class="ico" style="left:270px;top:467.5px" width="10" height="12" viewBox="0 0 10 12"><path d="M.3,.5 H10 V11.8 H.3 Z" fill="#fde38c"/><path d="M.3,.5 H2.4 V11.8 H.3 Z" fill="#f8d978"/><rect x="7.4" y="8.4" width="2.6" height="3.4" fill="#f3cf6a"/></svg><div class="nav" style="left:285px;top:468px;letter-spacing:-.15px">wallpapers</div>
<svg class="ico" style="left:268.5px;top:487.5px" width="12" height="9.5" viewBox="0 0 13 11"><g fill="#1fb0f0"><rect x=".6" y=".2" width="2.4" height="2.2"/><rect x="3.6" y=".2" width="2.6" height="2.2"/><rect x=".6" y="3" width="2.4" height="2.2"/><rect x="3.6" y="3" width="2.6" height="2.2"/></g><path d="M2,6.4 H12 L12.6,9.8 H1.4 Z" fill="#c9cdd1"/><rect x="1.4" y="8" width="11.2" height="2.4" fill="#2f3234"/></svg>
<div class="nav" style="left:285px;top:485.7px;letter-spacing:-.05px">Windows (C:)</div>
<svg class="ico" style="left:262px;top:511px" width="14" height="10" viewBox="0 0 14 10"><path d="M3.4,9.2 H11 A2.6,2.6 0 0 0 11.4,4 A3.6,3.6 0 0 0 4.8,2.8 A2.4,2.4 0 0 0 2.4,4.8 A2.3,2.3 0 0 0 3.4,9.2 Z" fill="#1574c8"/></svg>
<div class="nav" style="left:279px;top:510.5px;letter-spacing:-.1px">OneDrive - Personal</div>
<svg class="ico" style="left:261px;top:534px" width="14" height="13" viewBox="0 0 15 13"><rect x="1.5" y="1" width="12" height="8" fill="#4fb4ee" stroke="#3a8fd0" stroke-width=".8"/><rect x="2.6" y="2" width="9.8" height="5.8" fill="#7fd0f8"/><rect x="6.5" y="9.4" width="2" height="1.4" fill="#8aa0b4"/><rect x="2" y="11" width="11" height="1" fill="#7f98ae"/></svg><div class="nav" style="left:279px;top:534.5px;letter-spacing:-.35px">This PC</div>
<svg class="ico" style="left:269px;top:553px" width="13" height="12" viewBox="0 0 13 12"><path d="M6.5,.4 L12.4,2.4 V9.4 L6.5,11.6 L.6,9.4 V2.4 Z" fill="#35b7e6"/><path d="M6.5,4.6 L12.4,2.4 V9.4 L6.5,11.6 Z" fill="#1787c2"/><path d="M.6,2.4 L6.5,.4 L12.4,2.4 L6.5,4.6 Z" fill="#8fe3f8"/><path d="M2.2,5 L5,6 V9.6 L2.2,8.6 Z" fill="#d8f6fc"/></svg>
<div class="nav" style="left:285px;top:552.5px;letter-spacing:-.1px">3D Objects</div>
<svg class="ico" style="left:269px;top:572.5px" width="13" height="10" viewBox="0 0 13 10"><rect x=".3" y=".3" width="12.4" height="9" rx=".6" fill="#1c8ae6"/><rect x="1" y="1" width="11" height="6.6" fill="#2f9cf0"/><rect x=".3" y="8" width="12.4" height="1.4" fill="#1565b8"/></svg><div class="nav" style="left:285px;top:571px;letter-spacing:-.15px">Desktop</div>
<svg class="ico" style="left:270.5px;top:589px" width="10" height="12" viewBox="0 0 10 12"><path d="M.6,.5 H6.6 L9.4,3.3 V11.5 H.6 Z" fill="#fdfdfd" stroke="#9aa3ad" stroke-width=".8"/><path d="M2.4,3.4 H5.6 M2.4,5.4 H4.4 M5.6,5.4 H7.8 M2.4,7.4 H7.8 M2.4,9.4 H4.4 M5.6,9.4 H7.8" stroke="#4f93cc" stroke-width="1"/><rect x="4.4" y="4.6" width="1.2" height="5.4" fill="#a9cfee"/></svg><div class="nav" style="left:285px;top:589.5px;letter-spacing:-.15px">Documents</div>

<!-- content -->
<svg class="ico" style="left:424px;top:335px" width="6" height="9" viewBox="0 0 6 9"><path d="M1,.8 L4.8,4.5 L1,8.2" fill="none" stroke="#8a8a8a" stroke-width="1"/></svg>
<div class="hdr" style="top:332px;letter-spacing:-.1px">Folders (7)</div><div class="hline" style="left:493px;top:339px;width:412px"></div>
<svg class="ico" style="left:422px;top:359px" width="10" height="6" viewBox="0 0 10 6"><path d="M.8,.8 L5,5 L9.2,.8" fill="none" stroke="#6a6a6a" stroke-width="1"/></svg>
<div class="hdr" style="top:354.5px">Devices and drives (5)</div><div class="hline" style="left:550px;top:362px;width:355px"></div>
<svg class="ico" style="left:475.5px;top:386px" width="33" height="25" viewBox="0 0 33 25"><path d="M.8,14.1 L15,8.5 C16,8.1 17,8.1 18,8.2 L25.5,9.2 L32.2,13.1 L14.1,18.6 Z" fill="#e6e7e8"/><path d="M.8,14.1 L14.1,18.6 V24.2 L.8,20.3 Z" fill="#34373a"/><path d="M14.1,18.6 L32.2,13.1 V18.4 L14.1,24.2 Z" fill="#bfc2c5"/><path d="M1.8,15.8 L12.6,19.4 V22.4 L1.8,19.2 Z" fill="#1c1e20"/><rect x="11.4" y="20" width="1.6" height="1.4" fill="#c9ccce"/><g fill="#0cb4ee"><path d="M.6,1.6 L4.9,1 V5.7 H.6 Z"/><path d="M6.3,.9 L12.9,.1 V5.7 H6.3 Z"/><path d="M.6,6.7 H4.9 V11.6 L.6,11 Z"/><path d="M6.3,6.7 H12.9 V12.9 L6.3,12 Z"/></g></svg>
<div class="t" style="left:514px;top:376px;letter-spacing:-.05px">Windows (C:)</div>
<div class="bar" style="top:389.5px"><i style="width:96px"></i></div>
<div class="t g" style="left:514px;top:400px;letter-spacing:-.27px">15.4 GB free of 68.8 GB</div>
<svg class="ico" style="left:475.5px;top:431.2px" width="33" height="25" viewBox="0 0 33 25"><path d="M.8,14.1 L15,8.5 C16,8.1 17,8.1 18,8.2 L25.5,9.2 L32.2,13.1 L14.1,18.6 Z" fill="#e6e7e8"/><path d="M.8,14.1 L14.1,18.6 V24.2 L.8,20.3 Z" fill="#34373a"/><path d="M14.1,18.6 L32.2,13.1 V18.4 L14.1,24.2 Z" fill="#bfc2c5"/><path d="M1.8,15.8 L12.6,19.4 V22.4 L1.8,19.2 Z" fill="#1c1e20"/><rect x="11.4" y="20" width="1.6" height="1.4" fill="#c9ccce"/></svg>
<div class="t" style="left:514px;top:421.5px;letter-spacing:-.1px">Data 1 (E:)</div>
<div class="bar" style="top:435px"><i style="width:1.3px"></i></div>
<div class="t g" style="left:514px;top:445.5px;letter-spacing:-.27px">19.8 GB free of 19.9 GB</div>
<div class="abs" style="left:429px;top:464.5px;width:213px;height:42px;background:#d9d9d9"></div>
<svg class="ico" style="left:432px;top:480.5px" width="10" height="10" viewBox="0 0 10 10"><rect x=".5" y=".5" width="9" height="9" fill="#fff" stroke="#333" stroke-width="1"/><path d="M2.2,5 L4.2,7 L7.8,2.8" fill="none" stroke="#222" stroke-width="1"/></svg>
<svg class="ico" style="left:475.5px;top:476.3px" width="33" height="25" viewBox="0 0 33 25"><path d="M.8,14.1 L15,8.5 C16,8.1 17,8.1 18,8.2 L25.5,9.2 L32.2,13.1 L14.1,18.6 Z" fill="#e6e7e8"/><path d="M.8,14.1 L14.1,18.6 V24.2 L.8,20.3 Z" fill="#34373a"/><path d="M14.1,18.6 L32.2,13.1 V18.4 L14.1,24.2 Z" fill="#bfc2c5"/><path d="M1.8,15.8 L12.6,19.4 V22.4 L1.8,19.2 Z" fill="#1c1e20"/><rect x="11.4" y="20" width="1.6" height="1.4" fill="#c9ccce"/></svg>
<div class="t" style="left:514px;top:467.5px;letter-spacing:-.1px">workUSB (H:)</div>
<div class="bar" style="top:481px;background:#e0e0e0;border-color:#c4c4c4"><i style="width:0"></i></div>
<div class="t g" style="left:514px;top:491px;letter-spacing:-.27px">15.0 GB free of 15.1 GB</div>
<svg class="ico" style="left:422px;top:517px" width="10" height="6" viewBox="0 0 10 6"><path d="M.8,.8 L5,5 L9.2,.8" fill="none" stroke="#6a6a6a" stroke-width="1"/></svg>
<div class="hdr" style="top:512px;letter-spacing:.2px">Network locations (1)</div><div class="hline" style="left:548px;top:519.5px;width:357px"></div>
<svg class="ico" style="left:476px;top:533px" width="36" height="38" viewBox="0 0 36 38"><defs><linearGradient id="th1" x1="0" y1="0" x2="1" y2="0"><stop offset="0" stop-color="#eceef0"/><stop offset=".55" stop-color="#d4d7da"/><stop offset="1" stop-color="#b4b8bc"/></linearGradient><linearGradient id="th2" x1="0" y1="0" x2="0" y2="1"><stop offset="0" stop-color="#b9bdc1"/><stop offset="1" stop-color="#8e9297"/></linearGradient></defs><path d="M2.3,9 C2.3,7.6 3,6.8 4.2,6.4 L6.5,5.6 V36.8 L3.4,35.4 C2.6,35 2.3,34.4 2.3,33.6 Z" fill="url(#th2)"/><path d="M6.5,5.6 L19,2.6 C23,1.8 27.1,2.6 27.1,6 V29.4 L6.5,36.8 Z" fill="url(#th1)"/><path d="M10.5,34.6 L24,29.8 V31.2 L10.5,36 Z" fill="#9ca0a5"/><rect x="3.3" y="9.6" width="1.5" height="3.4" fill="#b7dc46"/><rect x="18" y="2.6" width="10" height="12.2" fill="#27406e"/><rect x="19.6" y="3.4" width="6.8" height="4.6" fill="#3d8fd6"/><rect x="19.6" y="9" width="6.8" height="4.8" fill="#4a9be0"/><rect x="22" y="4.4" width="2" height="3.4" fill="#d88a4a"/><path d="M18.4,3 V14.4 M27.6,3 V14.4" stroke="#9db4d8" stroke-width=".7" stroke-dasharray="1,1"/><path d="M27.6,1.2 C32.4,3.4 34.4,7 33,11.2 C32.2,13.6 30.6,15 29.4,15.6 C31,12.6 30.8,8.4 27.6,5.8 Z" fill="#2b95e8"/><rect x="26.7" y="1.2" width="1.8" height="15" fill="#2b95e8"/><ellipse cx="24.8" cy="16.2" rx="3.7" ry="2.8" fill="#2b95e8"/><ellipse cx="24" cy="15.4" rx="1.6" ry="1" fill="#7cc4f6"/></svg>
<div class="t" style="left:514px;top:539px;letter-spacing:-.2px">Theater</div>
<!-- second column drive icon slivers -->
<svg class="ico" style="left:691px;top:386px" width="33" height="25" viewBox="0 0 33 25"><path d="M.8,14.1 L14.1,18.6 V24.2 L.8,20.3 Z" fill="#34373a"/></svg>
<svg class="ico" style="left:691px;top:431.2px" width="33" height="25" viewBox="0 0 33 25"><path d="M.8,14.1 L14.1,18.6 V24.2 L.8,20.3 Z" fill="#34373a"/></svg>
<!-- status bar -->
<div class="t" style="left:256px;top:605.5px;color:#333;letter-spacing:-.15px">13 items</div>
<div class="t" style="left:305px;top:605.5px;color:#333">1 item selected</div>
<svg class="ico" style="left:896px;top:606px" width="11" height="10" viewBox="0 0 11 10"><rect x=".5" y=".5" width="10" height="9" fill="#e8f2fc" stroke="#4a90d9" stroke-width="1"/><rect x="2" y="2" width="7" height="4" fill="#2a5f9e"/><rect x="2" y="7" width="4" height="1" fill="#2a5f9e"/></svg>

<!-- ================= FORMAT DIALOG ================= -->
<div id="dlg"><div id="dlgtitle"></div></div>
<div class="t" style="left:704px;top:363.5px;color:#fff;letter-spacing:-.12px">Format workUSB (H:)</div>
<svg class="ico" style="left:873px;top:364px" width="10" height="10" viewBox="0 0 10 10"><path d="M.8,.8 L9.2,9.2 M9.2,.8 L.8,9.2" stroke="#fff" stroke-width="1.1"/></svg>
<div class="t dl" style="left:706px;top:388px">Capacity:</div>
<div class="cmb" style="top:402px"><span>15.1 GB</span></div>
<div class="t dl" style="left:706px;top:423.5px">File system</div>
<div class="cmb" style="top:438px"><span style="letter-spacing:-.6px">NTFS</span></div>
<div class="t dl" style="left:706px;top:460px">Allocation unit size</div>
<div class="cmb" style="top:474px"><span>4096 bytes</span></div>
<div class="btn" style="left:707px;top:506px;width:101px">Restore device defaults</div>
<div class="t dl" style="left:706px;top:538.5px">Volume label</div>
<div class="abs" style="left:706px;top:551.5px;width:176px;height:16px;background:#fff;border:1px solid #7a7a7a"></div>
<div class="t dl" style="left:710px;top:554px">workUSB</div>
<div class="abs" style="left:706px;top:580px;width:176px;height:43px;border:1px solid #dcdcdc"></div>
<div class="t dl" style="left:710px;top:574px;background:#f0f0f0;padding:0 3px">Format options</div>
<svg class="ico" style="left:711px;top:592px" width="11" height="11" viewBox="0 0 11 11"><rect x=".5" y=".5" width="10" height="10" fill="#fff" stroke="#333" stroke-width="1"/><path d="M2.4,5.6 L4.6,7.8 L8.6,3" fill="none" stroke="#222" stroke-width="1.1"/></svg>
<div class="t dl" style="left:724px;top:591px">Quick Format</div>
<div class="abs" style="left:706px;top:633.8px;width:176px;height:10px;background:#e6e6e6;border:1px solid #bcbcbc"></div>
<div class="btn" style="left:763px;top:665.8px;width:55px;border:1px solid #0078d7;box-shadow:inset 0 0 0 1px #0078d7">Start</div>
<div class="btn" style="left:824.5px;top:665.8px;width:56px">Close</div>
</div>
</body>
</html>
